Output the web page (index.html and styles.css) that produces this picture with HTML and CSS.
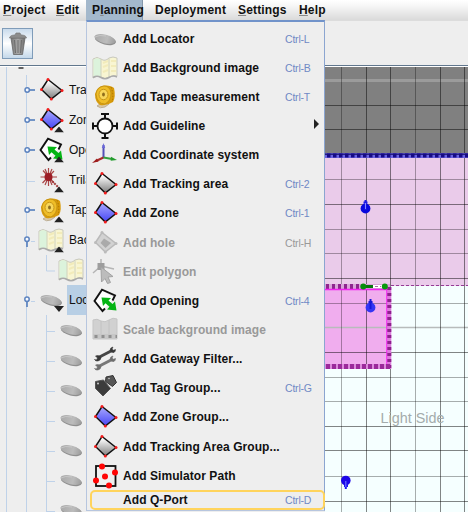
FILE: index.html
```html
<!DOCTYPE html>
<html lang="en">
<head>
<meta charset="utf-8">
<title>Site planner</title>
<link rel="stylesheet" href="styles.css">
</head>
<body>
<svg class="defs" width="0" height="0">
  <defs>
    <linearGradient id="gGray" x1="0" y1="0" x2="0" y2="1"><stop offset="0.1" stop-color="#fff"/><stop offset="1" stop-color="#7c7c7c"/></linearGradient>
    <linearGradient id="gBlue" x1="0" y1="0" x2="0" y2="1"><stop offset="0" stop-color="#aaaaff"/><stop offset="1" stop-color="#4545f4"/></linearGradient>
    <linearGradient id="gDisc" x1="0" y1="0" x2="1" y2="0"><stop offset="0" stop-color="#a9a9a9"/><stop offset="0.6" stop-color="#bcbcbc"/><stop offset="1" stop-color="#9d9d9d"/></linearGradient>
    <linearGradient id="gBin" x1="0" y1="0" x2="1" y2="0"><stop offset="0" stop-color="#777"/><stop offset="0.5" stop-color="#aaa"/><stop offset="1" stop-color="#6d6d6d"/></linearGradient>
  </defs>
  <symbol id="disc" viewBox="0 0 26 26">
    <ellipse cx="13.400" cy="14" rx="10.800" ry="4.600" transform="rotate(14 13.4 14)" fill="#8f8f8f"/>
    <ellipse cx="13" cy="13" rx="10.800" ry="4.300" transform="rotate(14 13 13)" fill="url(#gDisc)"/>
    <path d="M3 11Q7 8.500 14 10" fill="none" stroke="#d0d0d0" stroke-width=".7"/>
  </symbol>
  <symbol id="map" viewBox="0 0 26 26">
    <path d="M1 4Q5 1 9 4Q13 7 17 3Q21 1 25 3V21Q21 20 17 22Q13 25 9 22Q5 20 1 23Z" fill="#f8f5d2" stroke="#c8c8bd"/>
    <path d="M1.500 4.500Q5 2 9 4.500V21.500Q5 20 1.500 22Z" fill="#dcf3dc"/>
    <path d="M9 4V22M17 3.500V22" stroke="#d0d2be"/>
    <path d="M11 8l5-2M11 12l5-2M11 17l5-2M19 6h5M19 11h5M19 16h5" stroke="#f2ebba" stroke-width="2"/>
    <path d="M1 22.500Q5 20 9 22.500Q13 25 17 22.500Q21 20 25 22" fill="none" stroke="#aaa" stroke-width="1.500"/>
  </symbol>
  <symbol id="tape" viewBox="0 0 26 26">
    <path d="M5 22Q8 25 13 23L17 20L12 17Z" fill="#d9c8a4" stroke="#b4a58a" stroke-width=".8"/>
    <path d="M3 10Q5 2 12 1.500Q19 1 22 4Q24 13 21 18Q15 22 8 21Q3 18 3 10Z" fill="#d99c0b"/>
    <path d="M4 10Q5 3 12 2Q18 2 19 9Q19 17 13 20Q5 20 4 10Z" fill="#efbd27" stroke="#b98912" stroke-width=".7"/>
    <ellipse cx="11.500" cy="10.500" rx="4.500" ry="5.200" fill="#f8d75b" stroke="#c79518"/>
    <ellipse cx="11.500" cy="10.500" rx="1.400" ry="2" fill="#8d6d1c"/>
    <path d="M19 3Q22 10 20 18" fill="none" stroke="#aa7300" stroke-dasharray="1.500 1.500"/>
  </symbol>
  <symbol id="guide" viewBox="0 0 26 26">
    <circle cx="13" cy="13" r="7.500" fill="#fff" stroke="#111" stroke-width="1.800"/>
    <path d="M13 1V5.500M9 1h8M13 20.500V25M9.500 25h7M1 13H5.500M1 9.500v7M20.500 13H25M25 9.500v7" stroke="#111" stroke-width="2"/>
  </symbol>
  <symbol id="axes" viewBox="0 0 26 26">
    <path d="M11.500 16V3" stroke="#5350b8" stroke-width="2"/><path d="M9.800 6l1.700-5 1.700 5z" fill="#6a68d8"/>
    <path d="M11.500 15.500L4 19" stroke="#a92b2b" stroke-width="2.200"/><path d="M0 21l5-4.500 1.500 3z" fill="#9d1c1c"/>
    <path d="M11.500 15.500L20 17" stroke="#32a13c" stroke-width="2"/><path d="M25 18l-6-3.300-.3 4z" fill="#239c2d"/>
  </symbol>
  <symbol id="area" viewBox="0 0 26 26">
    <path d="M10 2.500L24 13.500L13.300 22L3.500 12.500Z" fill="url(#gGray)" stroke="#111" stroke-width="1.500"/>
    <g fill="#f51b1b"><circle cx="10" cy="2.500" r="1.500"/><circle cx="24" cy="13.500" r="1.500"/><circle cx="13.300" cy="22" r="1.500"/><circle cx="3.500" cy="12.500" r="1.500"/></g>
  </symbol>
  <symbol id="zone" viewBox="0 0 26 26">
    <path d="M10 2.500L24 13.500L13.300 22L3.500 12.500Z" fill="url(#gBlue)" stroke="#111" stroke-width="1.500"/>
    <g fill="#f51b1b"><circle cx="10" cy="2.500" r="1.500"/><circle cx="24" cy="13.500" r="1.500"/><circle cx="13.300" cy="22" r="1.500"/><circle cx="3.500" cy="12.500" r="1.500"/></g>
  </symbol>
  <symbol id="hole" viewBox="0 0 26 26">
    <path d="M10 2.500L24 13.500L13.300 22L3.500 12.500Z" fill="#d2d2d2" stroke="#b9b9b9" stroke-width="1.500"/>
    <path d="M12 8.500L19 13L13.500 18L8.500 13Z" fill="#aaa"/>
    <g fill="#bbb"><circle cx="10" cy="2.500" r="1.500"/><circle cx="24" cy="13.500" r="1.500"/><circle cx="13.300" cy="22" r="1.500"/><circle cx="3.500" cy="12.500" r="1.500"/></g>
  </symbol>
  <symbol id="poly" viewBox="0 0 26 26">
    <path d="M9 0V7M9 7L1 14M9 7L22 10" stroke="#b5b5b5" stroke-width="1.500"/><rect x="5.500" y="4" width="7" height="7" fill="#9d9d9d"/>
    <path d="M9 8L21 17.500L16 18L18.500 23.500L15.500 24.500L13 19.500L9.500 23Z" fill="#bcbcbc" stroke="#a3a3a3"/>
  </symbol>
  <symbol id="open" viewBox="0 0 26 26">
    <path d="M12 20.500L10 23L2.500 13L9 2L21.500 9.500L20.500 12" fill="#fff"/>
    <path d="M13 20.500L10.500 23L2.500 13L10 1.700L23 7.500L20.500 12.500" fill="none" stroke="#111" stroke-width="1.900"/>
    <path d="M9.500 9.500L19 10L16.500 12.500L20.500 16L23 13.500L24.500 22.500L15 21.500L17.500 18.800L13.500 15.300L11 18Z" fill="#04b414"/>
  </symbol>
  <symbol id="scale" viewBox="0 0 26 26">
    <path d="M1 3Q5 1 9 4Q13 6 17 3Q21 0 25 2V22H1Z" fill="#d1d1d1" stroke="#c5c5c5"/><path d="M9 4V17M17 3V17" stroke="#c2c2c2"/>
    <path d="M1 17H25V22H1Z" fill="#c7c7c7"/><path d="M2.500 19.500H25" stroke="#909090" stroke-width="3" stroke-dasharray="3 4"/>
  </symbol>
  <symbol id="tools" viewBox="0 0 26 26">
    <g id="wr"><path d="M6.500 11.500L20 4.500" stroke="#454545" stroke-width="3"/><path d="M5.500 9.500l-2 .5 2 2-1 2-2-.5q1 2 3.500 1.500 3-1 3-3.500-1-2-3.500-2M21 1q-3 .5-3 3.500 1 2.500 4 2 1.500-1 1.500-3l-2 .7-1.500-1.200z" fill="#383838" stroke="#383838" stroke-width=".6"/></g>
    <use href="#wr" y="9" opacity=".7"/>
  </symbol>
  <symbol id="tags" viewBox="0 0 26 26">
    <path d="M14 2l7-1.500 3.500 7-4 4-7-5z" fill="#555" stroke="#333"/>
    <path d="M3.500 6.500l8-1.500 7 8.500-7.500 7.500-7.500-7.500z" fill="#3c3c3c" stroke="#555"/>
    <circle cx="6" cy="8.500" r="1" fill="#ccc"/><circle cx="17" cy="3.500" r=".8" fill="#ccc"/>
  </symbol>
  <symbol id="sim" viewBox="0 0 26 26">
    <rect x="4" y="3" width="19.500" height="20" fill="#f0f0f0" stroke="#111" stroke-width="1.800"/>
    <g fill="#ff0505"><circle cx="10" cy="3.500" r="3"/><circle cx="23" cy="9.500" r="3"/><circle cx="13" cy="13.500" r="3"/><circle cx="4" cy="17.500" r="3"/><circle cx="17" cy="22.500" r="3"/></g>
  </symbol>
  <symbol id="burst" viewBox="0 0 26 26">
    <path d="M10.500 1V19M2.500 10H19M5 3.500L16 16M16 4L4.500 16M7 2l7 16M14 2L7 18" stroke="#a94545" stroke-width="1.200"/>
    <path d="M12 12L21 21" stroke="#a03838" stroke-width="2" stroke-dasharray="2 1"/><circle cx="10.500" cy="10" r="4" fill="#9c1d26"/>
  </symbol>
  <symbol id="up" viewBox="0 0 10 6"><path d="M0 6L5 0L10 6Z" fill="#222"/></symbol>
  <symbol id="down" viewBox="0 0 10 6"><path d="M0 0H10L5 6Z" fill="#222"/></symbol>
  <symbol id="knob" viewBox="0 0 12 12"><path d="M4 6H11" stroke="#5c83bf" stroke-width="1.700"/><circle cx="3.200" cy="6" r="2.200" fill="#f4f8ff" stroke="#5c83bf" stroke-width="1.500"/></symbol>
</svg>

<div class="app">
  <nav class="menubar">
    <span class="m m-project"><u>P</u>roject</span>
    <span class="m m-edit"><u>E</u>dit</span>
    <span class="m m-planning">P<u>l</u>anning</span>
    <span class="m m-deploy">Deployment</span>
    <span class="m m-settings"><u>S</u>ettings</span>
    <span class="m m-help"><u>H</u>elp</span>
  </nav>
  <div class="toolbar">
    <button class="tool" aria-label="Delete"><svg width="20" height="24" viewBox="0 0 20 24">
      <path d="M3 6L5.500 22.500H14.500L17 6Z" fill="url(#gBin)" stroke="#666" stroke-width=".8"/>
      <path d="M6.500 8L7.500 21M10 8V21M13.500 8L12.500 21" stroke="#6c6c6c"/>
      <path d="M1.500 6Q2 3 7 3L8 1H12L13 3Q18 3 18.500 6Z" fill="#8c8c8c" stroke="#777" stroke-width=".7"/></svg></button>
  </div>
  <main class="work">
    <aside class="tree">
      <svg class="guides" width="86" height="446">
        <path d="M6.500 0V446M26.500 8V446M46.500 188V204H55M46.500 248V446M27 114.500H35M31 174.500H35M31 234.500H35M46 264.500H55M46 294.500H55M46 324.500H55M46 354.500H55M46 384.500H55M46 414.500H55M46 444.500H55" fill="none" stroke="#bfd2e9"/>
        <path d="M18.500 1H23.500" stroke="#333" stroke-width="1.500"/>
      </svg>
      <div class="rows">
        <div class="row"><svg class="knob"><use href="#knob"/></svg><svg class="ico"><use href="#area"/></svg><span>Tracking</span></div>
        <div class="row"><svg class="knob"><use href="#knob"/></svg><svg class="ico"><use href="#zone"/><use href="#up" x="16" y="19.500" width="10" height="6"/></svg><span>Zones</span></div>
        <div class="row"><svg class="knob"><use href="#knob"/></svg><svg class="ico"><use href="#open"/><use href="#up" x="16" y="19.500" width="10" height="6"/></svg><span>Openings</span></div>
        <div class="row"><svg class="knob"></svg><svg class="ico"><use href="#burst"/><use href="#up" x="16" y="19.500" width="10" height="6"/></svg><span>Trilateration</span></div>
        <div class="row"><svg class="knob"><use href="#knob"/></svg><svg class="ico"><use href="#tape"/><use href="#up" x="16" y="19.500" width="10" height="6"/></svg><span>Tape</span></div>
        <div class="row"><svg class="knob turned"><use href="#knob"/></svg><svg class="ico"><use href="#map"/><use href="#up" x="16" y="19.500" width="10" height="6"/></svg><span>Background</span></div>
        <div class="row child"><svg class="ico"><use href="#map"/></svg></div>
        <div class="row"><svg class="knob turned"><use href="#knob"/></svg><svg class="ico"><use href="#disc"/><use href="#down" x="16" y="19" width="10" height="6"/></svg><span class="sel">Locators</span></div>
        <div class="row child"><svg class="ico"><use href="#disc"/></svg></div>
        <div class="row child"><svg class="ico"><use href="#disc"/></svg></div>
        <div class="row child"><svg class="ico"><use href="#disc"/></svg></div>
        <div class="row child"><svg class="ico"><use href="#disc"/></svg></div>
        <div class="row child"><svg class="ico"><use href="#disc"/></svg></div>
        <div class="row child"><svg class="ico"><use href="#disc"/></svg></div>
        <div class="row child"><svg class="ico"><use href="#disc"/></svg></div>
      </div>
    </aside>
    <svg class="plan" width="143" height="445" viewBox="325 67 143 445">
      <rect x="325" y="67" width="143" height="445" fill="#f5ffff"/>
      <rect x="325" y="67" width="143" height="88" fill="#808080"/>
      <rect x="325" y="157" width="143" height="129" fill="#eacbea"/>
      <rect x="325" y="286" width="64" height="80" fill="#f0adee"/>
      <path d="M325 80.500H468" stroke="#9b9b9b" stroke-width="3"/>
      <path d="M325 327.500H468" stroke="#b8bcbc" stroke-width="1.500"/>
      <g stroke="#000" stroke-opacity=".48" fill="none">
        <path d="M366.500 67V512M390.500 67V512M440.500 67V512M464.500 67V512M325 105.500H468M325 129.500H468M325 204.500H468M325 278.500H468M325 352.500H468M325 426.500H468M325 450.500H468M325 501.500H468"/>
        <path stroke-opacity=".32" d="M341.500 67V512M415.500 67V512M325 179.500H468M325 229.500H468M325 253.500H468M325 303.500H468M325 377.500H468M325 401.500H468M325 476.500H468"/>
      </g>
      <path d="M325 155.500H468" stroke="#6a62e2" stroke-width="5"/><path d="M325 154.200H468" stroke="#27217f" stroke-width="1.500"/><path d="M327 155.500H468" stroke="#170b85" stroke-width="4" stroke-dasharray="3.500 2.500"/>
      <path d="M391 285.500H468" stroke="#963a96" stroke-dasharray="3 2"/>
      <path d="M325 286.500H390" stroke="#d9a3d9" stroke-width="5"/><path d="M326 286.500H362" stroke="#8e258e" stroke-width="5" stroke-dasharray="3 3"/>
      <path d="M325 289.500H387V365" stroke="#f321f3" fill="none" stroke-width="1.500"/>
      <path d="M389.300 287V369" stroke="#db7bdb" stroke-width="4"/><path d="M389.300 287V369" stroke="#8f208f" stroke-width="4" stroke-dasharray="3 3"/>
      <path d="M325 366.500H390" stroke="#dc8bdc" stroke-width="5"/><path d="M326 366.500H391" stroke="#9b2a9b" stroke-width="5" stroke-dasharray="4 2"/>
      <path d="M363 286.500H373" stroke="#07770d" stroke-width="3"/><path d="M373 286.500H382" stroke="#fff" stroke-width="3"/>
      <path d="M375 286.500H381" stroke="#a56ca5" stroke-dasharray="3 2"/>
      <circle cx="363.300" cy="286.500" r="3" fill="#078e0d"/><circle cx="384.800" cy="286.500" r="3" fill="#079a0d"/>
      <g><circle cx="365.500" cy="208.500" r="4.900" fill="#0808dd"/><path d="M365.500 200V210M363.500 202.500h4" stroke="#1818e8" stroke-width="2"/><path d="M365.500 203V209" stroke="#8585ff"/></g>
      <g><circle cx="370.500" cy="307.500" r="4.900" fill="#3434f4"/><path d="M370.500 299V309M368.500 302h4" stroke="#1818d8" stroke-width="2"/></g>
      <g><circle cx="345.800" cy="480.500" r="4.800" fill="#1b05e8"/><path d="M345.800 481V489M344 486h4" stroke="#1b12f1" stroke-width="2"/><path d="M345.800 481V487" stroke="#7777ff"/></g>
      <text class="label" x="380.500" y="422.500" textLength="64" lengthAdjust="spacingAndGlyphs">Light Side</text>
    </svg>
  </main>

  <div class="menu">
    <div class="item"><svg><use href="#disc"/></svg><span>Add Locator</span><kbd>Ctrl-L</kbd></div>
    <div class="item"><svg><use href="#map"/></svg><span>Add Background image</span><kbd>Ctrl-B</kbd></div>
    <div class="item"><svg><use href="#tape"/></svg><span>Add Tape measurement</span><kbd>Ctrl-T</kbd></div>
    <div class="item"><svg><use href="#guide"/></svg><span>Add Guideline</span><i class="arrow"></i></div>
    <div class="item"><svg><use href="#axes"/></svg><span>Add Coordinate system</span></div>
    <div class="item"><svg><use href="#area"/></svg><span>Add Tracking area</span><kbd>Ctrl-2</kbd></div>
    <div class="item"><svg><use href="#zone"/></svg><span>Add Zone</span><kbd>Ctrl-1</kbd></div>
    <div class="item off"><svg><use href="#hole"/></svg><span>Add hole</span><kbd>Ctrl-H</kbd></div>
    <div class="item off"><svg><use href="#poly"/></svg><span>Edit polygon</span></div>
    <div class="item"><svg><use href="#open"/></svg><span>Add Opening</span><kbd>Ctrl-4</kbd></div>
    <div class="item off"><svg><use href="#scale"/></svg><span>Scale background image</span></div>
    <div class="item"><svg><use href="#tools"/></svg><span>Add Gateway Filter...</span></div>
    <div class="item"><svg><use href="#tags"/></svg><span>Add Tag Group...</span><kbd>Ctrl-G</kbd></div>
    <div class="item"><svg><use href="#zone"/></svg><span>Add Zone Group...</span></div>
    <div class="item"><svg><use href="#area"/></svg><span>Add Tracking Area Group...</span></div>
    <div class="item"><svg><use href="#sim"/></svg><span>Add Simulator Path</span></div>
    <div class="item marked"><span>Add Q-Port</span><kbd>Ctrl-D</kbd></div>
  </div>
</div>
</body>
</html>
```
FILE: styles.css
```css
* { box-sizing: border-box; }
body { margin: 0; overflow: hidden; font-family: "Liberation Sans", Arial, sans-serif; color: #111; }
.defs { position: absolute; }
.app { position: relative; width: 468px; height: 512px; display: flex; flex-direction: column; overflow: hidden; background: #eee; }

.menubar { height: 20px; flex: none; display: flex; background: linear-gradient(#fff, #f6f6f6 30%, #dadada); font-weight: bold; font-size: 12px; line-height: 20px; }
.m { white-space: nowrap; letter-spacing: 0.15px; }
.m u { text-decoration-color: #888; text-underline-offset: 1px; text-decoration-thickness: 1px; }
.m-project { width: 53px; padding-left: 3px; letter-spacing: 0.25px; }
.m-edit { width: 33px; padding-left: 3px; }
.m-planning { width: 57px; padding-left: 6px; background: #a3b8cc; border-right: 1px solid #8497aa; }
.m-deploy { width: 95px; padding-left: 12px; letter-spacing: 0.25px; }
.m-settings { width: 61px; }
.m-help { width: 40px; }

.toolbar { height: 47px; flex: none; padding: 7px 2px 0; background: #eee; border-top: 1px solid #dcdcdc; border-bottom: 1px solid #fff; box-shadow: inset 0 -1px #61778d; }
.tool { width: 31px; height: 31px; padding: 0; display: flex; align-items: center; justify-content: center; border: 1px solid #7f9cb9; background: linear-gradient(#c9dbec, #fff 50%, #c4d8ea); }

.work { flex: 1; display: flex; }
.tree { position: relative; width: 86px; overflow: hidden; }
.guides { position: absolute; left: 0; top: 0; }
.rows { padding-top: 8px; }
.row { position: relative; height: 30px; display: flex; align-items: center; padding-left: 24px; font-size: 12px; white-space: nowrap; }
.row.child { padding-left: 58px; }
.row .knob { width: 12px; height: 12px; margin-right: 2px; flex: none; }
.row .turned { transform: translate(-3px, 2px) rotate(90deg); }
.row .ico { width: 26px; height: 26px; flex: none; }
.row span { margin-left: 3px; padding: 0 2px; line-height: 30px; }
.row .sel { background: #b8cfe5; }
.plan { margin-left: 239px; flex: none; }
.label { font-size: 14px; fill: #a4acac; }

.menu { position: absolute; left: 86px; top: 20px; width: 239px; height: 491px; padding: 2px 0 0 5px; display: grid; grid-template-rows: repeat(16, 29.15px) 20px; align-content: start; background: #eee; border: solid #b7c6df; border-width: 1px 1px 1px 1px; border-top: 2px solid #7193ca; border-right-color: #8ba5d0; }
.item { display: flex; align-items: center; font-size: 12px; letter-spacing: 0.07px; font-weight: bold; white-space: nowrap; }
.item svg { width: 26px; height: 26px; flex: none; margin-right: 5px; }
.item span { width: 162px; }
.item kbd { font: 10.5px "Liberation Sans", Arial, sans-serif; letter-spacing: -0.2px; color: #7089c5; }
.off, .off kbd, .off span { color: #999; }
.arrow { margin-left: 29px; margin-top: -3px; border-left: 5px solid #222; border-top: 5px solid transparent; border-bottom: 5px solid transparent; }
.marked { margin: 0 -1px 0 -2px; padding-left: 31px; height: 20px; border: 2.5px solid #ffd45c; border-radius: 5px; }
```
